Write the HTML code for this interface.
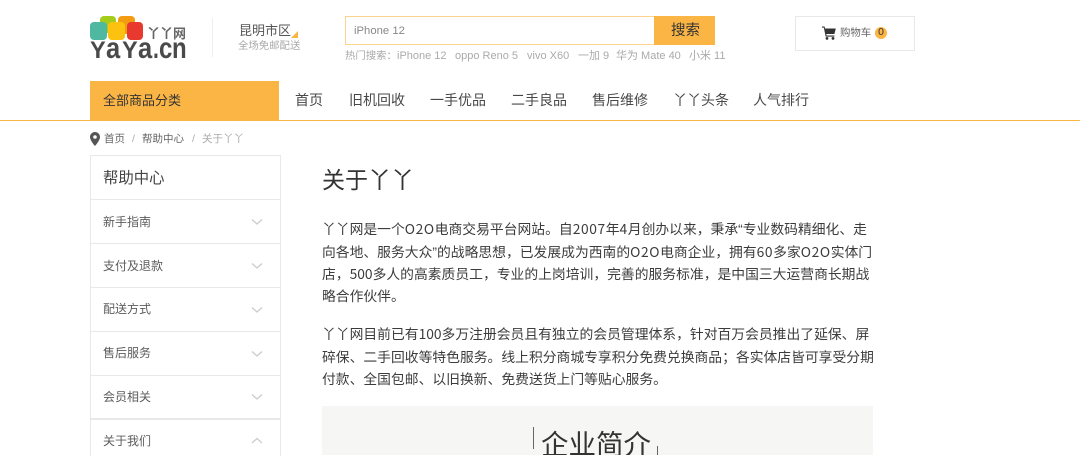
<!DOCTYPE html>
<html lang="zh-CN">
<head>
<meta charset="utf-8">
<title>关于丫丫</title>
<style>
html,body{margin:0;padding:0;background:#fff;}
body{width:1080px;height:455px;overflow:hidden;position:relative;font-family:"Liberation Sans","Noto Sans CJK SC",sans-serif;color:#333;}
.a{position:absolute;white-space:nowrap;line-height:1;}
.box{position:absolute;}
.p{position:absolute;left:322px;white-space:nowrap;font-size:13.8px;line-height:22px;color:#3c3c3c;height:22px;font-family:"Noto Sans CJK SC",sans-serif;}
.p b{font-weight:normal;font-family:"Liberation Sans",sans-serif;}
.p i{font-style:normal;letter-spacing:.6px;}
.nav{position:absolute;top:90px;font-size:14px;line-height:20px;color:#484848;white-space:nowrap;}
.side{position:absolute;left:103px;font-size:12px;line-height:16px;color:#5c5c5c;white-space:nowrap;}
.line{position:absolute;left:91px;width:189px;height:1px;background:#e8e8e8;}
.hot{position:absolute;top:51px;font-size:11px;line-height:11px;color:#aaa;white-space:nowrap;}
.l{position:absolute;font-weight:bold;color:#4a4a4a;line-height:1;transform-origin:0 100%;}
svg{position:absolute;display:block;}
</style>
</head>
<body>
<!-- logo -->
<div class="box" style="left:100px;top:16px;width:16px;height:17px;background:#a5cc1b;border-radius:4px;"></div>
<div class="box" style="left:118px;top:16px;width:17px;height:18px;background:#f39c12;border-radius:4px;"></div>
<div class="box" style="left:127px;top:22px;width:16px;height:18px;background:#e8392e;border-radius:4px;"></div>
<div class="box" style="left:108px;top:22px;width:17px;height:18px;background:#fcc20f;border-radius:4px;"></div>
<div class="box" style="left:90px;top:22px;width:17px;height:18px;background:#4fb8a0;border-radius:4px;"></div>
<div class="a" style="left:147px;top:26px;font-size:13px;font-weight:bold;color:#666;font-family:'Noto Sans CJK SC',sans-serif;">丫丫网</div>
<div style="position:absolute;left:0;top:0;width:200px;height:61px;overflow:hidden;">
<span class="l" style="left:90px;top:39px;font-size:24px;transform:scaleX(.98);">Y</span>
<span class="l" style="left:106px;top:34px;font-size:30px;transform:scaleX(.85);">a</span>
<span class="l" style="left:122px;top:39px;font-size:24px;transform:scaleX(.98);">Y</span>
<span class="l" style="left:138px;top:34px;font-size:30px;transform:scaleX(.85);">a</span>
<span class="l" style="left:153px;top:34px;font-size:30px;transform:scaleX(.7);">.</span>
<span class="l" style="left:159px;top:34px;font-size:30px;transform:scaleX(.8);">c</span>
<span class="l" style="left:172px;top:34px;font-size:30px;transform:scaleX(.8);">n</span>
</div>
<div class="box" style="left:212px;top:18px;width:1px;height:39px;background:#eee;"></div>
<div class="a" style="left:239px;top:24px;font-size:13px;color:#555;">昆明市区</div>
<svg style="left:291px;top:31px" width="7" height="7"><path d="M7 0V7H0Z" fill="#fbb545"/></svg>
<div class="a" style="left:238px;top:42px;font-size:10.4px;color:#aaa;">全场免邮配送</div>

<!-- search -->
<div class="box" style="left:345px;top:16px;width:309px;height:27px;border:1px solid #fcd28c;border-right:0;"></div>
<div class="a" style="left:354px;top:26px;font-size:11.3px;color:#888;">iPhone 12</div>
<div class="box" style="left:654px;top:16px;width:61px;height:29px;background:#fbb545;"></div>
<div class="a" style="left:671px;top:24px;font-size:14.5px;color:#333;">搜索</div>
<div class="hot" style="left:345px;font-size:10.4px;">热门搜索：</div>
<div class="hot" style="left:397px;">iPhone 12</div>
<div class="hot" style="left:455px;">oppo Reno 5</div>
<div class="hot" style="left:527px;">vivo X60</div>
<div class="hot" style="left:578px;">一加 9</div>
<div class="hot" style="left:616px;">华为 Mate 40</div>
<div class="hot" style="left:689px;">小米 11</div>

<!-- cart -->
<div class="box" style="left:795px;top:16px;width:118px;height:33px;border:1px solid #e8e8e8;"></div>
<svg style="left:822px;top:26px" width="14" height="14" viewBox="0 0 14 14"><path d="M0 .5H2.6L3 2.5H13.8L12.4 8H4.3L4.6 9.5H12.4V10.6H3.7L1.8 1.6H0Z" fill="#333"/><circle cx="5" cy="12.4" r="1.4" fill="#333"/><circle cx="11" cy="12.4" r="1.4" fill="#333"/></svg>
<div class="a" style="left:840px;top:29px;font-size:10.4px;color:#666;">购物车</div>
<div class="box" style="left:875px;top:27px;width:12px;height:12px;border-radius:50%;background:#fbb545;"></div>
<div class="a" style="left:875px;top:28px;width:12px;text-align:center;font-size:10.4px;color:#333;">0</div>

<!-- nav -->
<div class="box" style="left:0;top:120px;width:1080px;height:1px;background:#fbb545;"></div>
<div class="box" style="left:90px;top:81px;width:189px;height:40px;background:#fbb545;"></div>
<div class="a" style="left:103px;top:94px;font-size:13px;color:#333;">全部商品分类</div>
<div class="nav" style="left:295px;">首页</div>
<div class="nav" style="left:349px;">旧机回收</div>
<div class="nav" style="left:430px;">一手优品</div>
<div class="nav" style="left:511px;">二手良品</div>
<div class="nav" style="left:592px;">售后维修</div>
<div class="nav" style="left:673px;">丫丫头条</div>
<div class="nav" style="left:753px;">人气排行</div>

<!-- breadcrumb -->
<svg style="left:90px;top:132px" width="10" height="14" viewBox="0 0 10 14"><path fill-rule="evenodd" d="M5 0C2.2 0 0 2.2 0 5C0 8.5 5 14 5 14S10 8.5 10 5C10 2.2 7.8 0 5 0ZM5 3.2A1.8 1.8 0 1 1 5 6.8A1.8 1.8 0 1 1 5 3.2Z" fill="#555"/></svg>
<div class="a" style="left:104px;top:134px;font-size:10.5px;color:#666;">首页</div>
<div class="a" style="left:132px;top:134px;font-size:10.5px;color:#aaa;">/</div>
<div class="a" style="left:142px;top:134px;font-size:10.5px;color:#666;">帮助中心</div>
<div class="a" style="left:192px;top:134px;font-size:10.5px;color:#aaa;">/</div>
<div class="a" style="left:202px;top:134px;font-size:10.5px;color:#aaa;">关于丫丫</div>

<!-- sidebar -->
<div class="box" style="left:90px;top:155px;width:189px;height:300px;border:1px solid #e8e8e8;border-bottom:0;"></div>
<div class="a" style="left:103px;top:171px;font-size:15.4px;color:#444;">帮助中心</div>
<div class="line" style="top:199px;"></div>
<div class="side" style="top:214px;">新手指南</div>
<div class="line" style="top:243px;"></div>
<div class="side" style="top:258px;">支付及退款</div>
<div class="line" style="top:287px;"></div>
<div class="side" style="top:301px;">配送方式</div>
<div class="line" style="top:331px;"></div>
<div class="side" style="top:345px;">售后服务</div>
<div class="line" style="top:375px;"></div>
<div class="side" style="top:389px;">会员相关</div>
<div class="line" style="top:418px;height:2px;"></div>
<div class="side" style="top:433px;">关于我们</div>
<svg style="left:251px;top:218px" width="12" height="8"><path d="M1 1.5L6 6L11 1.5" fill="none" stroke="#ccc" stroke-width="1.3"/></svg>
<svg style="left:251px;top:262px" width="12" height="8"><path d="M1 1.5L6 6L11 1.5" fill="none" stroke="#ccc" stroke-width="1.3"/></svg>
<svg style="left:251px;top:306px" width="12" height="8"><path d="M1 1.5L6 6L11 1.5" fill="none" stroke="#ccc" stroke-width="1.3"/></svg>
<svg style="left:251px;top:350px" width="12" height="8"><path d="M1 1.5L6 6L11 1.5" fill="none" stroke="#ccc" stroke-width="1.3"/></svg>
<svg style="left:251px;top:393px" width="12" height="8"><path d="M1 1.5L6 6L11 1.5" fill="none" stroke="#ccc" stroke-width="1.3"/></svg>
<svg style="left:251px;top:437px" width="12" height="8"><path d="M1 6L6 1.5L11 6" fill="none" stroke="#ccc" stroke-width="1.3"/></svg>

<!-- content -->
<div class="a" style="left:322px;top:169px;font-size:23px;color:#333;">关于丫丫</div>
<div class="p" style="top:217px;">丫丫网是一个<i>O2O</i>电商交易平台网站。自<i>2007</i>年<i>4</i>月创办以来，秉承<b>“</b>专业数码精细化、走</div>
<div class="p" style="top:240px;">向各地、服务大众<b>”</b>的战略思想，已发展成为西南的<i>O2O</i>电商企业，拥有<i>60</i>多家<i>O2O</i>实体门</div>
<div class="p" style="top:262px;">店，500多人的高素质员工，专业的上岗培训，完善的服务标准，是中国三大运营商长期战</div>
<div class="p" style="top:284px;">略合作伙伴。</div>
<div class="p" style="top:322px;">丫丫网目前已有100多万注册会员且有独立的会员管理体系，针对百万会员推出了延保、屏</div>
<div class="p" style="top:345px;">碎保、二手回收等特色服务。线上积分商城专享积分免费兑换商品；各实体店皆可享受分期</div>
<div class="p" style="top:367px;">付款、全国包邮、以旧换新、免费送货上门等贴心服务。</div>

<div class="box" style="left:322px;top:406px;width:551px;height:49px;background:#f6f6f4;overflow:hidden;">
  <div class="box" style="left:211px;top:21px;width:1px;height:22px;background:#666;"></div>
  <div class="a" style="left:219px;top:25px;font-size:27.5px;color:#333;">企业简介</div>
  <div class="box" style="left:335px;top:40px;width:1px;height:9px;background:#666;"></div>
</div>
</body>
</html>
